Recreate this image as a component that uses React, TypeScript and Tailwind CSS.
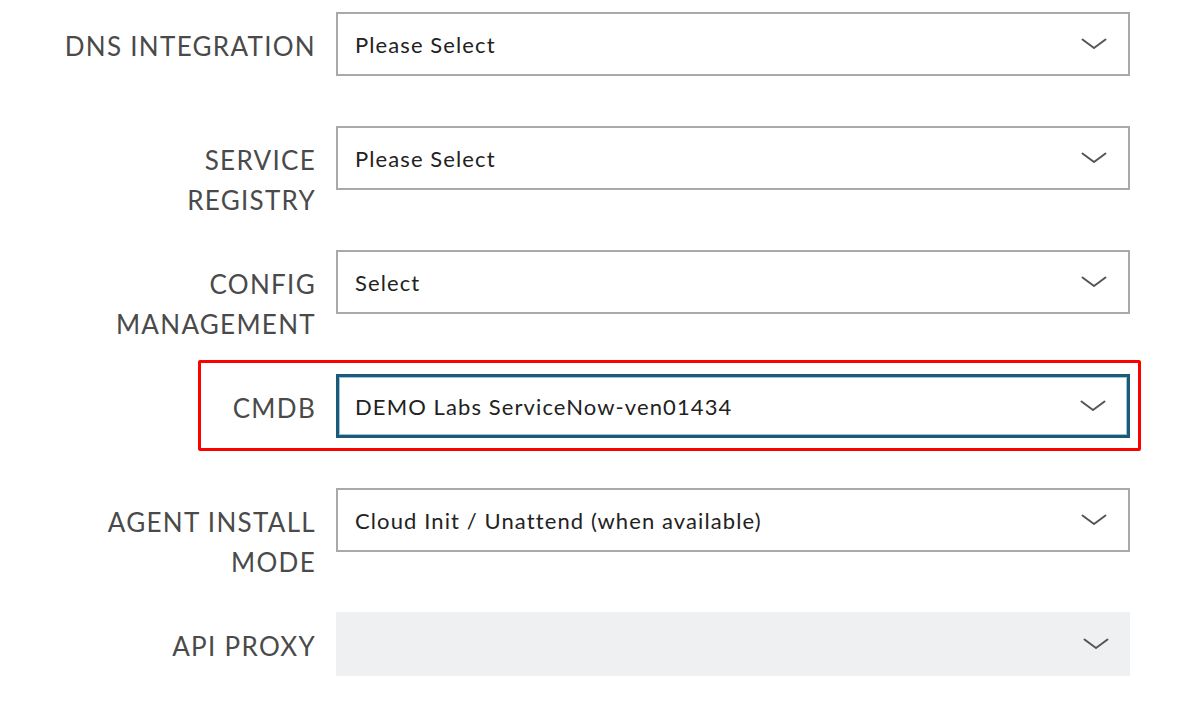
import React from "react";

const Chevron = () => (
  <svg width="26" height="12" viewBox="0 0 26 12" className="shrink-0">
    <path d="M1.5 1.5 L13 10 L24.5 1.5" fill="none" stroke="#555" strokeWidth="2" strokeLinecap="round" strokeLinejoin="round" />
  </svg>
);

type RowProps = {
  label: React.ReactNode;
  value: string;
  variant?: "normal" | "focus" | "disabled";
  className?: string;
};

const Row = ({ label, value, variant = "normal", className = "" }: RowProps) => {
  const box =
    variant === "focus"
      ? "bg-white border-[3px] border-[#1c5a7a] shadow-[inset_0_0_0_1px_#9cc3d6] pl-[16px]"
      : variant === "disabled"
      ? "bg-[#eff0f2] pl-[19px]"
      : "bg-white border-2 border-[#a9a9a9] pl-[17px]";
  return (
    <div className={`flex items-start ${className}`}>
      <div className="w-[301px] text-right text-[26px] leading-[40px] pt-[14px] text-[#4a4a4a] tracking-[1.3px]">
        {label}
      </div>
      <div
        className={`ml-[20px] w-[794px] h-[64px] flex items-center justify-between pr-[21px] ${box}`}
      >
        <span className="text-[22px] text-[#222] tracking-[1.1px]">{value}</span>
        <Chevron />
      </div>
    </div>
  );
};

export default function App() {
  return (
    <div
      className="w-[1190px] h-[722px] bg-white pl-[15px] pt-[12px] overflow-hidden"
      style={{ fontFamily: "Lato, 'Open Sans', sans-serif" }}
    >
      <Row label="DNS INTEGRATION" value="Please Select" className="mb-[50px]" />
      <Row
        label={
          <>
            SERVICE
            <br />
            REGISTRY
          </>
        }
        value="Please Select"
        className="mb-[30px]"
      />
      <Row
        label={
          <>
            CONFIG
            <br />
            MANAGEMENT
          </>
        }
        value="Select"
        className="mb-[30px]"
      />
      <div className="relative mb-[50px]">
        <div className="absolute left-[183px] right-[49px] -top-[14px] -bottom-[13px] border-[3px] border-[#ff0000] rounded-[2px]" />
        <Row label="CMDB" value="DEMO Labs ServiceNow-ven01434" variant="focus" />
      </div>
      <Row
        label={
          <>
            AGENT INSTALL
            <br />
            MODE
          </>
        }
        value="Cloud Init / Unattend (when available)"
        className="mb-[30px]"
      />
      <Row label="API PROXY" value="" variant="disabled" />
    </div>
  );
}
